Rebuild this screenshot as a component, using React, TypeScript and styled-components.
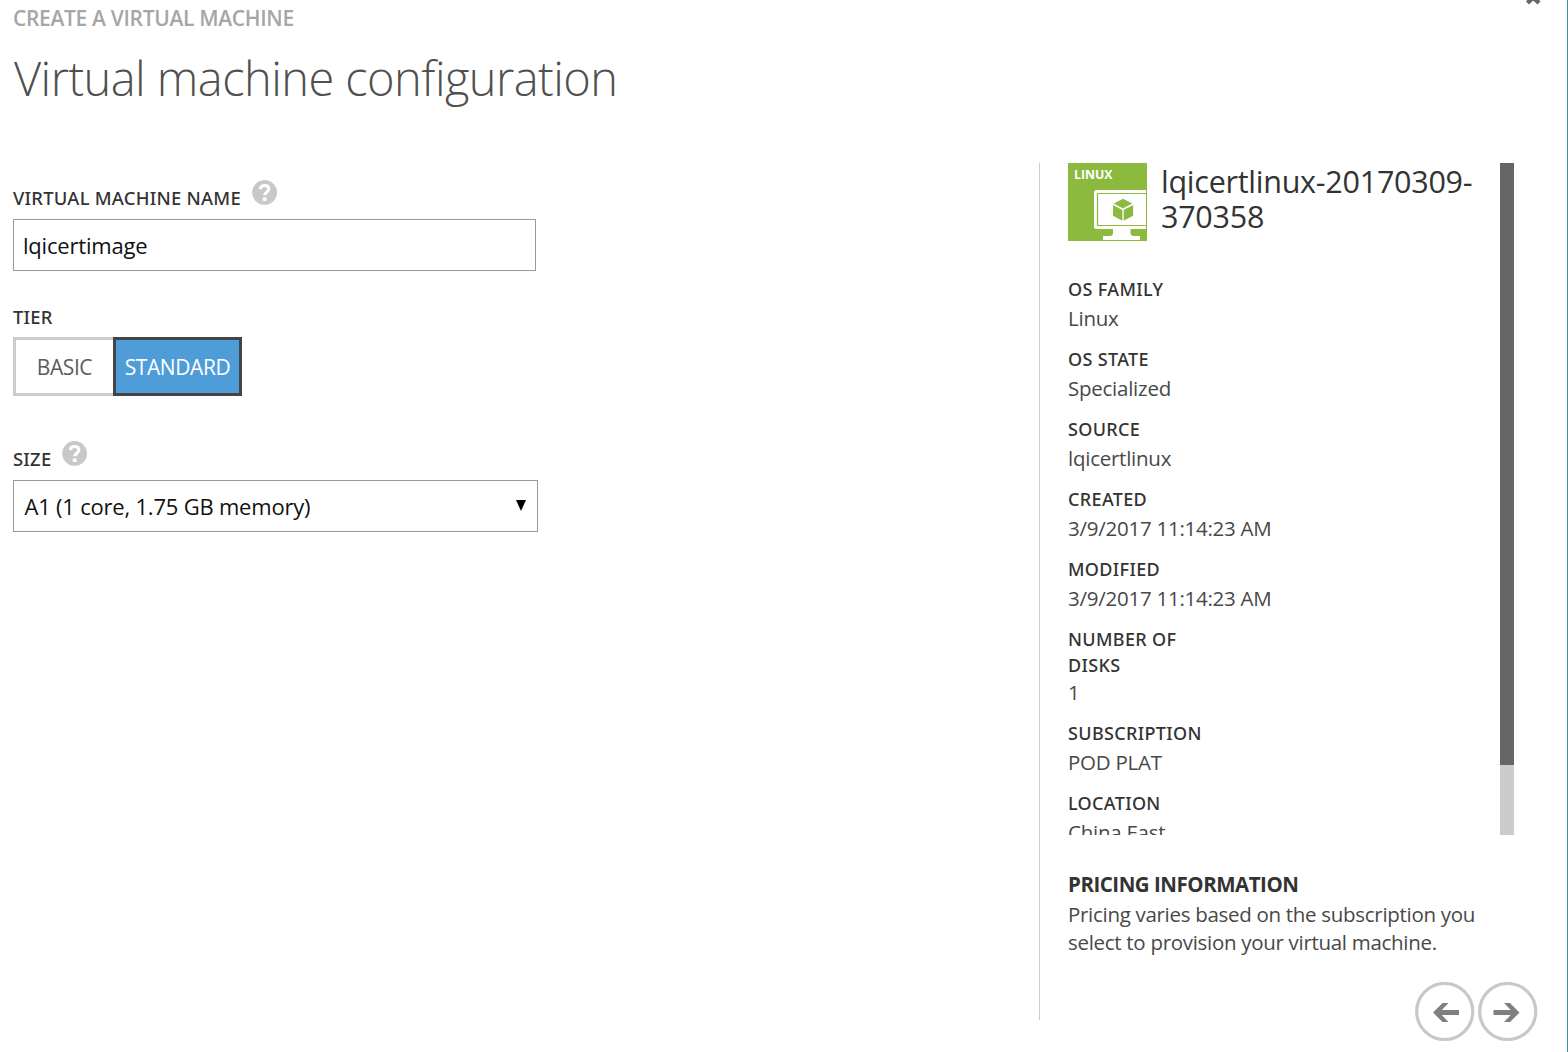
import React from "react";
import styled, { createGlobalStyle } from "styled-components";

const GlobalStyle = createGlobalStyle`
  * { box-sizing: border-box; }
  body {
    margin: 0;
    background: #fff;
    overflow: hidden;
  }
`;

const Dialog = styled.main`
  position: relative;
  width: 1568px;
  height: 1052px;
  overflow: hidden;
  padding: 4px 0 0 13px;
  border-right: 1px solid #3c8dae;
  background: #fff;
  color: #333;
  font-family: "Open Sans", "Noto Sans", sans-serif;
`;

const CloseButton = styled.button`
  position: absolute;
  top: -11px;
  right: 25px;
  width: 17px;
  height: 17px;
  padding: 0;
  border: 0;
  background: none;
  line-height: 0;
`;

const Eyebrow = styled.p`
  margin: 0;
  color: #a6a6a6;
  font-size: 21px;
  font-weight: 600;
  line-height: 29px;
  letter-spacing: -0.33px;
`;

const Title = styled.h1`
  margin: 15px 0 0 1px;
  color: #505050;
  font-size: 47px;
  font-weight: 300;
  line-height: 60px;
  letter-spacing: -0.55px;
`;

const Body = styled.div`
  display: flex;
  margin-top: 55px;
`;

const Form = styled.form`
  flex: none;
  width: 1026px;
  padding-top: 17px;
`;

const Field = styled.div<{ $gap?: number }>`
  margin-top: ${(p) => p.$gap ?? 0}px;
`;

const LabelRow = styled.div<{ $height?: number }>`
  display: flex;
  gap: 10px;
  height: ${(p) => p.$height ?? 39}px;
`;

const FieldLabel = styled.label<{ $drop?: number }>`
  margin-top: ${(p) => p.$drop ?? 5}px;
  font-family: "Noto Sans", "Open Sans", sans-serif;
  font-size: 18.4px;
  font-weight: 500;
  line-height: 26px;
  letter-spacing: 0.24px;
`;

const TextInput = styled.input`
  display: block;
  width: 523px;
  height: 52px;
  padding: 0 9px 1px;
  border: 1px solid #999;
  border-radius: 0;
  outline: 0;
  color: #111;
  background: #fff;
  font: 400 22px "Open Sans", "Noto Sans", sans-serif;
  letter-spacing: -0.2px;
`;

const SelectBox = styled.div`
  display: flex;
  align-items: center;
  justify-content: space-between;
  width: 525px;
  height: 52px;
  padding: 0 11px 0 10.5px;
  border: 1px solid #999;
  color: #111;
  font-size: 22px;
  letter-spacing: -0.21px;
`;

const Caret = styled.span`
  width: 0;
  height: 0;
  margin-top: -1px;
  border: 5.5px solid transparent;
  border-top: 11px solid #000;
  border-bottom: 0;
`;

const Segments = styled.div`
  display: flex;
`;

const Segment = styled.button<{ $active?: boolean }>`
  width: ${(p) => (p.$active ? 129 : 100)}px;
  height: 59px;
  padding: 0;
  border: 3px solid ${(p) => (p.$active ? "#444" : "#ccc")};
  border-right-width: ${(p) => (p.$active ? 3 : 0)}px;
  color: ${(p) => (p.$active ? "#fff" : "#5c5c5c")};
  background: ${(p) => (p.$active ? "#4e9dd8" : "#fff")};
  font: 400 21px "Open Sans", "Noto Sans", sans-serif;
  letter-spacing: -0.42px;
`;

const Divider = styled.div`
  flex: none;
  width: 1px;
  height: 857px;
  background: #ccc;
`;

const Sidebar = styled.aside`
  display: flex;
  flex-direction: column;
  width: 498px;
  padding-left: 28px;
`;

const ScrollPane = styled.section`
  display: flex;
  justify-content: space-between;
  width: 446px;
  height: 672px;
  overflow: hidden;
`;

const Track = styled.div`
  flex: none;
  width: 14px;
  height: 672px;
  background: #ccc;
`;

const Thumb = styled.div`
  height: 602px;
  background: #666;
`;

const ImageHeader = styled.header`
  display: flex;
  gap: 14px;
  height: 113px;
`;

const ImageName = styled.h2`
  width: 325px;
  margin: 1px 0 0;
  color: #333;
  font-size: 30.5px;
  font-weight: 400;
  line-height: 35px;
  letter-spacing: -0.26px;
`;

const Details = styled.dl`
  margin: 0;
`;

const Detail = styled.div`
  margin-bottom: 14px;
`;

const Term = styled.dt`
  width: 125px;
  min-height: 28px;
  white-space: pre-line;
  font-family: "Noto Sans", "Open Sans", sans-serif;
  font-size: 18px;
  font-weight: 500;
  line-height: 26px;
  letter-spacing: 0.35px;
`;

const Value = styled.dd`
  margin: 0;
  color: #484848;
  font-size: 20.5px;
  line-height: 28px;
  letter-spacing: -0.25px;
`;

const Pricing = styled.section`
  margin-top: 35px;
`;

const PricingTitle = styled.h3`
  margin: 0 0 2px;
  font-size: 20.5px;
  font-weight: 700;
  line-height: 28px;
  letter-spacing: -0.48px;
`;

const PricingText = styled.p`
  width: 430px;
  margin: 0;
  color: #484848;
  font-size: 20.5px;
  line-height: 28px;
  letter-spacing: -0.3px;
`;

const Navigation = styled.nav`
  display: flex;
  justify-content: flex-end;
  gap: 3px;
  margin-top: 26px;
`;

const NavButton = styled.button`
  display: block;
  width: 60px;
  height: 60px;
  padding: 0;
  border: 0;
  background: none;
  line-height: 0;
`;

const HelpIcon = () => (
  <svg width="27" height="26" viewBox="0 0 27 26" aria-label="Help">
    <circle cx="13.600" cy="12.400" r="12.400" fill="#c8c8c8" />
    <path
      d="M9.400 9.200C9.600 6.800 11.100 5.500 13.600 5.500c2.500 0 4.200 1.300 4.200 3.500 0 3.200-4.100 3.200-4.100 6.300"
      fill="none"
      stroke="#fff"
      strokeWidth="3.200"
    />
    <rect x="11.800" y="17.500" width="3.800" height="3.400" fill="#fff" />
  </svg>
);

const LinuxLogo = () => (
  <svg width="79" height="78" viewBox="0 0 79 78">
    <rect width="79" height="78" fill="#8cba3f" />
    <text x="6" y="15.500" fill="#fff" fontSize="12.500" fontWeight="700" textLength="38.500" lengthAdjust="spacingAndGlyphs">
      LINUX
    </text>
    <path d="M78 27H28.500a2.500 2.500 0 0 0-2.500 2.500v34a2.500 2.500 0 0 0 2.500 2.500H45v4q0 3-3.500 3H35v4h37v-4h-6q-3.500 0-3.500-3v-4H78z" fill="#fff" />
    <path d="M78 30.500H29.500V62.500H78" fill="none" stroke="#8cba3f" strokeWidth="1.200" />
    <path d="M55 35.700l9.200 4.900L55 45.500l-9.200-4.900z" fill="#8cba3f" />
    <path d="M45 42.100l9.400 5v10.700l-9.400-5.100zM65.100 42.100l-9.400 5v10.700l9.400-5.100z" fill="#8cba3f" />
  </svg>
);

const ArrowIcon = ({ forward }: { forward?: boolean }) => (
  <svg width="60" height="60" viewBox="0 0 60 60">
    <circle cx="29.700" cy="29.500" r="28" fill="#fff" stroke="#c8c8c8" strokeWidth="3.200" />
    <path
      transform={forward ? "translate(59.500 0) scale(-1 1)" : undefined}
      d="M18 30.500L27.500 21H33.500L26.800 27.900H44V33.100H26.800L33.500 40H27.500z"
      fill="#808080"
    />
  </svg>
);

const details = [
  ["OS FAMILY", "Linux"],
  ["OS STATE", "Specialized"],
  ["SOURCE", "lqicertlinux"],
  ["CREATED", "3/9/2017 11:14:23 AM"],
  ["MODIFIED", "3/9/2017 11:14:23 AM"],
  ["NUMBER OF\nDISKS", "1"],
  ["SUBSCRIPTION", "POD PLAT"],
  ["LOCATION", "China East"],
];

export default function App() {
  return (
    <Dialog>
      <GlobalStyle />
      <CloseButton type="button" aria-label="Close">
        <svg width="17" height="17" viewBox="0 0 17 17">
          <path d="M2.500 2.500L14 14M14 2.500L2.500 14" stroke="#666" strokeWidth="4.400" />
        </svg>
      </CloseButton>
      <Eyebrow>CREATE A VIRTUAL MACHINE</Eyebrow>
      <Title>Virtual machine configuration</Title>
      <Body>
        <Form>
          <Field>
            <LabelRow>
              <FieldLabel htmlFor="vm-name">VIRTUAL MACHINE NAME</FieldLabel>
              <HelpIcon />
            </LabelRow>
            <TextInput id="vm-name" defaultValue="lqicertimage" />
          </Field>
          <Field $gap={33}>
            <LabelRow $height={33}>
              <FieldLabel as="span" $drop={0}>TIER</FieldLabel>
            </LabelRow>
            <Segments>
              <Segment type="button">BASIC</Segment>
              <Segment type="button" $active>STANDARD</Segment>
            </Segments>
          </Field>
          <Field $gap={45}>
            <LabelRow>
              <FieldLabel as="span">SIZE</FieldLabel>
              <HelpIcon />
            </LabelRow>
            <SelectBox role="combobox">
              A1 (1 core, 1.75 GB memory)
              <Caret />
            </SelectBox>
          </Field>
        </Form>
        <Divider />
        <Sidebar>
          <ScrollPane>
            <div>
              <ImageHeader>
                <LinuxLogo />
                <ImageName>
                  lqicertlinux-20170309-
                  <br />
                  370358
                </ImageName>
              </ImageHeader>
              <Details>
                {details.map(([term, value]) => (
                  <Detail key={term}>
                    <Term>{term}</Term>
                    <Value>{value}</Value>
                  </Detail>
                ))}
              </Details>
            </div>
            <Track>
              <Thumb />
            </Track>
          </ScrollPane>
          <Pricing>
            <PricingTitle>PRICING INFORMATION</PricingTitle>
            <PricingText>
              Pricing varies based on the subscription you
              <br />
              select to provision your virtual machine.
            </PricingText>
          </Pricing>
          <Navigation>
            <NavButton type="button" aria-label="Back">
              <ArrowIcon />
            </NavButton>
            <NavButton type="button" aria-label="Next">
              <ArrowIcon forward />
            </NavButton>
          </Navigation>
        </Sidebar>
      </Body>
    </Dialog>
  );
}
